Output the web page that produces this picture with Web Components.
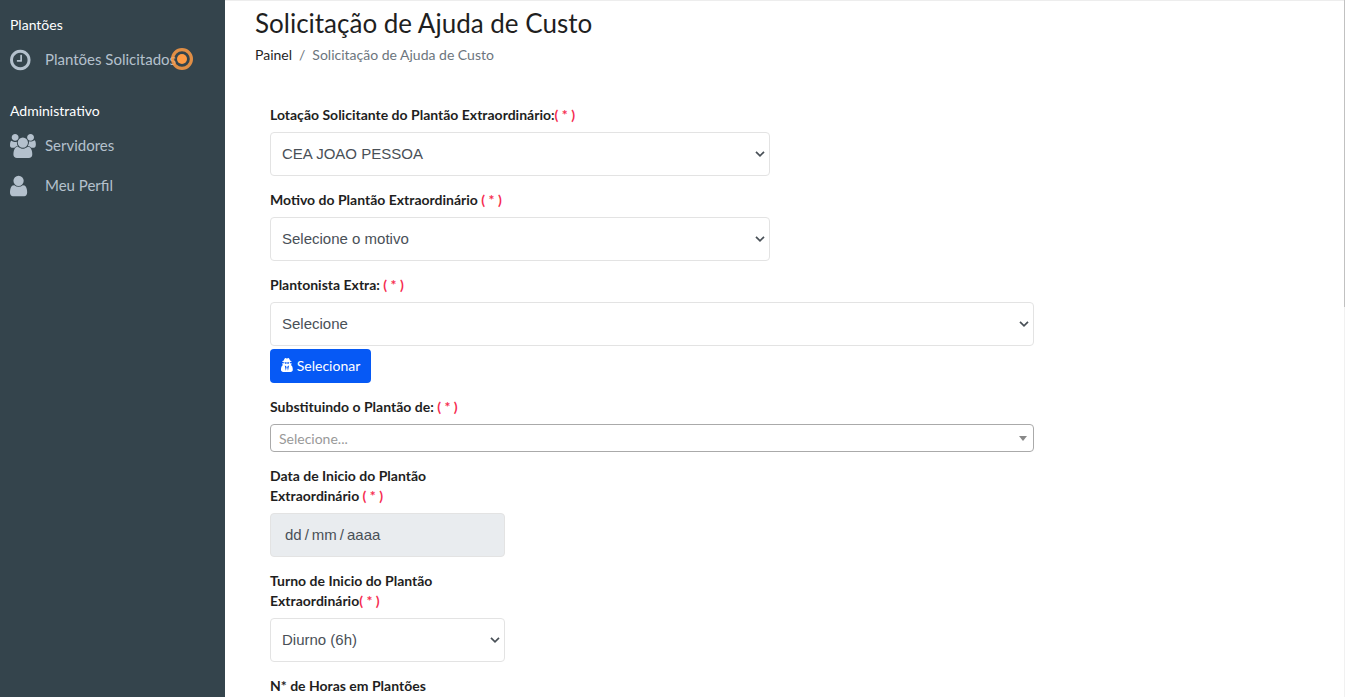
<!DOCTYPE html>
<html lang="pt-BR">
<head>
<meta charset="utf-8">
<meta name="viewport" content="width=device-width, initial-scale=1">
<title>Solicitação de Ajuda de Custo</title>
<style>
  body { margin: 0; font-family: Lato, sans-serif; font-size: 14px; line-height: 20px; color: #212529; background: #fff; }
</style>
</head>
<body>
<app-shell>
  <side-nav slot="nav">
    <nav-group heading="Plantões">
      <nav-item icon="clock" alert>Plantões Solicitados</nav-item>
    </nav-group>
    <nav-group heading="Administrativo">
      <nav-item icon="users">Servidores</nav-item>
      <nav-item icon="user">Meu Perfil</nav-item>
    </nav-group>
  </side-nav>
  <page-header heading="Solicitação de Ajuda de Custo" parent="Painel"></page-header>
  <request-form></request-form>
</app-shell>

<script>
const define = (name, html, setup) => {
  const template = document.createElement('template');
  template.innerHTML = html;
  customElements.define(name, class extends HTMLElement {
    connectedCallback() {
      if (this.shadowRoot) return;
      const content = template.content.cloneNode(true);
      if (setup) setup(this, content);
      this.attachShadow({ mode: 'open' }).append(content);
    }
  });
};

const icons = {
  clock: ['128 0 1536 1792', 'M1024 544v448q0 14-9 23t-23 9h-320q-14 0-23-9t-9-23v-64q0-14 9-23t23-9h224v-352q0-14 9-23t23-9h64q14 0 23 9t9 23zm416 352q0-148-73-273t-198-198-273-73-273 73-198 198-73 273 73 273 198 198 273 73 273-73 198-198 73-273zm224 0q0 209-103 385.5t-279.5 279.5-385.5 103-385.5-103-279.5-279.5-103-385.5 103-385.5 279.5-279.5 385.5-103 385.5 103 279.5 279.5 103 385.5z'],
  user: ['256 0 1280 1792', 'M1536 1399q0 109-62.5 187t-150.5 78h-854q-88 0-150.5-78t-62.5-187q0-85 8.5-160.5t31.5-152 58.5-131 94-89 134.5-34.5q131 128 313 128t313-128q76 0 134.5 34.5t94 89 58.5 131 31.5 152 8.5 160.5zm-256-887q0 159-112.5 271.5t-271.5 112.5-271.5-112.5-112.5-271.5 112.5-271.5 271.5-112.5 271.5 112.5 112.5 271.5z'],
  users: ['-64 0 1920 1792', 'M529 896q-162 5-265 128h-134q-82 0-138-40.5t-56-118.5q0-353 124-353 6 0 43.5 21t97.5 42.5 119 21.5q67 0 133-23-5 37-5 66 0 159 93 293zm1071 637q0 120-73 189.5t-194 69.5h-874q-121 0-194-69.5t-73-189.5q0-53 3.5-103.5t14-109 26.5-108.5 43-97.5 62-81 85.5-53.5 111.5-20q10 0 43 21.5t73 48 107 48 135 21.5 135-21.5 107-48 73-48 43-21.5q61 0 111.5 20t85.5 53.5 62 81 43 97.5 26.5 108.5 14 109 3.5 103.5zm-1024-1277q0 106-75 181t-181 75-181-75-75-181 75-181 181-75 181 75 75 181zm704 384q0 159-112.5 271.5t-271.5 112.5-271.5-112.5-112.5-271.5 112.5-271.5 271.5-112.5 271.5 112.5 112.5 271.5zm576 225q0 78-56 118.5t-138 40.5h-134q-103-123-265-128 93-134 93-293 0-29-5-66 66 23 133 23 59 0 119-21.5t97.5-42.5 43.5-21q124 0 124 353zm-128-609q0 106-75 181t-181 75-181-75-75-181 75-181 181-75 181 75 75 181z'],
  secret: ['0 0 1408 1792', 'M576 1536l96-448-96-128-128-64zm256 0l128-640-128 64-96 128zm160-1010q-2-4-4-6-10-8-96-8-70 0-167 19-7 2-21 2t-21-2q-97-19-167-19-86 0-96 8-2 2-4 6 2 18 4 27 2 3 7.5 6.5t7.5 10.5q2 4 7.5 20.5t7 20.5 7.5 17 8.5 17 9 14 12 13.5 14 9.5 17.5 8 20.5 4 24.5 2q36 0 59-12.5t32.5-30 14.5-34.5 11.5-29.5 17.5-12.5h12q11 0 17.5 12.5t11.5 29.5 14.5 34.5 32.5 30 59 12.5q13 0 24.5-2t20.5-4 17.5-8 14-9.5 12-13.5 9-14 8.5-17 7.5-17 7-20.5 7.5-20.5q2-7 7.5-10.5t7.5-6.5q2-9 4-27zm416 879q0 121-73 190t-194 69h-874q-121 0-194-69t-73-190q0-61 4.5-118t19-125.5 37.5-123.5 63.5-103.5 93.5-74.5l-90-220h214q-22-64-22-128 0-12 2-32-194-40-194-96 0-57 210-99 17-62 51.5-134t70.5-114q32-37 76-37 30 0 84 31t84 31 84-31 84-31q44 0 76 37 36 42 70.5 114t51.5 134q210 42 210 99 0 56-194 96 7 81-20 160h214l-82 225q63 33 107.5 96.5t65.5 143.5 29 151.5 8 148.5z']
};

define('ui-icon', `
  <style>
    :host { display: inline-flex; }
    svg { height: var(--icon-size, 24px); width: auto; display: block; fill: currentColor; overflow: visible; }
  </style>
  <svg aria-hidden="true"><path/></svg>`, (el, root) => {
  const [box, d] = icons[el.getAttribute('name')];
  root.querySelector('svg').setAttribute('viewBox', box);
  root.querySelector('path').setAttribute('d', d);
});

define('nav-item', `
  <style>
    :host { display: block; }
    a { display: flex; align-items: center; height: 40px; padding-left: 10px; color: #b4c1cd; font-size: 15px; text-decoration: none; }
    ui-icon { width: 35px; padding-top: 1px; }
    .text { position: relative; }
    .alert { position: absolute; right: -18px; top: -2px; width: 24px; height: 24px; display: none; }
    :host([alert]) .alert { display: block; }
  </style>
  <a href="#"><ui-icon></ui-icon><span class="text"><slot></slot>
    <svg class="alert" viewBox="0 0 24 24" aria-hidden="true"><circle cx="12" cy="12" r="9.4" fill="none" stroke="#ff9b44" stroke-opacity=".85" stroke-width="3.2"/><circle cx="12" cy="12" r="5" fill="#ff9b44"/></svg>
  </span></a>`, (el, root) => root.querySelector('ui-icon').setAttribute('name', el.getAttribute('icon')));

define('nav-group', `
  <style>
    :host { display: block; }
    h2 { margin: 0; padding: 0 10px; font-size: 14px; line-height: 20px; font-weight: 400; color: #fff; height: 24px; }
  </style>
  <h2></h2><slot></slot>`, (el, root) => root.querySelector('h2').textContent = el.getAttribute('heading'));

define('side-nav', `
  <style>
    :host { display: block; box-sizing: border-box; width: 225px; padding-top: 15px; background: #34444c; }
    nav { display: flex; flex-direction: column; gap: 22px; }
  </style>
  <nav aria-label="Principal"><slot></slot></nav>`);

define('app-shell', `
  <style>
    :host { display: flex; height: 100vh; overflow: hidden; }
    ::slotted([slot=nav]) { flex: none; }
    main { flex: 1; min-width: 0; overflow: auto; scrollbar-width: none; box-sizing: border-box; border-top: 1px solid #ededed; padding: 5px 30px 30px; }
    .track { flex: none; width: 1px; background: #f1f1f1; }
    .thumb { height: 44%; background: #c1c1c1; }
  </style>
  <slot name="nav"></slot>
  <main><slot></slot></main>
  <div class="track"><div class="thumb"></div></div>`);

define('page-header', `
  <style>
    :host { display: block; margin-bottom: 40px; }
    h1 { margin: 0 0 4px; font-size: 26px; line-height: 35px; font-weight: 400; color: #1f1f1f; }
    ol { display: flex; gap: 7px; margin: 0; padding: 0; list-style: none; color: #6c757d; }
    a { color: #1f1f1f; text-decoration: none; }
  </style>
  <h1></h1>
  <ol><li><a href="#"></a></li><li aria-hidden="true">/</li><li class="here"></li></ol>`, (el, root) => {
  root.querySelector('h1').textContent = root.querySelector('.here').textContent = el.getAttribute('heading');
  root.querySelector('a').textContent = el.getAttribute('parent');
});

define('form-field', `
  <style>
    :host { display: block; box-sizing: border-box; padding: 0 15px; width: 50%; }
    :host([size=large]) { width: 75%; }
    :host([size=small]) { width: 25%; }
    label { display: block; margin-bottom: 7px; font-weight: 700; color: #1f1f1f; }
    .required { color: #f62d51; }
    :host([optional]) .required { display: none; }
    .control { display: block; box-sizing: border-box; width: 100%; height: 44px; margin: 0; border: 1px solid #e3e3e3; border-radius: 4px; background: #fff; color: #495057; font: 15px "Liberation Sans", Arial, sans-serif; opacity: 1; }
    input.control { padding: 0 14px 2px; background: #e9ecef; }
    input::placeholder { color: #495057; opacity: 1; }
    select.control { appearance: none; padding: 0 20px 2px 11px;
      background: #fff url("data:image/svg+xml,%3Csvg xmlns='http://www.w3.org/2000/svg' width='10' height='6'%3E%3Cpath d='M1 .8l4 4 4-4' fill='none' stroke='%23495057' stroke-width='1.7'/%3E%3C/svg%3E") no-repeat right 4px center; }
    select.search { height: 28px; padding: 0 20px 0 8px; border-color: #aaa; color: #999; font: 14px Lato, sans-serif;
      background: #fff url("data:image/svg+xml,%3Csvg xmlns='http://www.w3.org/2000/svg' width='8' height='5'%3E%3Cpath d='M0 0h8L4 5z' fill='%23888'/%3E%3C/svg%3E") no-repeat right 6px center; }
    ::slotted(*) { margin-top: 3px; }
  </style>
  <label for="control"><span class="required">( * )</span></label>
  <slot></slot>`, (el, root) => {
  const label = root.querySelector('label');
  const [first, second] = el.getAttribute('label').split('|');
  label.prepend(first, ...(second ? [document.createElement('br'), second] : []));
  const type = el.getAttribute('type');
  const control = document.createElement(type === 'date' ? 'input' : 'select');
  control.id = 'control';
  control.className = type === 'search' ? 'control search' : 'control';
  if (type === 'date') {
    control.placeholder = el.getAttribute('value');
    control.disabled = true;
  } else {
    control.add(new Option(el.getAttribute('value')));
  }
  label.after(control);
});

define('action-button', `
  <style>
    :host { display: block; }
    button { display: flex; align-items: center; gap: 4px; height: 34px; padding: 0 11px 2px; border: 0; border-radius: 4px; background: #0659f5; color: #fff; font: 14px Lato, sans-serif; }
    ui-icon { --icon-size: 15px; padding-top: 1px; }
  </style>
  <button type="button"><ui-icon name="secret"></ui-icon><slot></slot></button>`);

define('request-form', `
  <style>
    :host { display: block; }
    form { display: flex; flex-direction: column; gap: 14px; margin: 0; }
  </style>
  <form>
    <form-field label="Lotação Solicitante do Plantão Extraordinário:" value="CEA JOAO PESSOA"></form-field>
    <form-field label="Motivo do Plantão Extraordinário " value="Selecione o motivo"></form-field>
    <form-field size="large" label="Plantonista Extra: " value="Selecione"><action-button>Selecionar</action-button></form-field>
    <form-field size="large" type="search" label="Substituindo o Plantão de: " value="Selecione..."></form-field>
    <form-field size="small" type="date" label="Data de Inicio do Plantão|Extraordinário " value="dd&#8201;/&#8201;mm&#8201;/&#8201;aaaa"></form-field>
    <form-field size="small" label="Turno de Inicio do Plantão|Extraordinário" value="Diurno (6h)"></form-field>
    <form-field size="small" optional label="N* de Horas em Plantões" value=""></form-field>
  </form>`);
</script>
</body>
</html>
